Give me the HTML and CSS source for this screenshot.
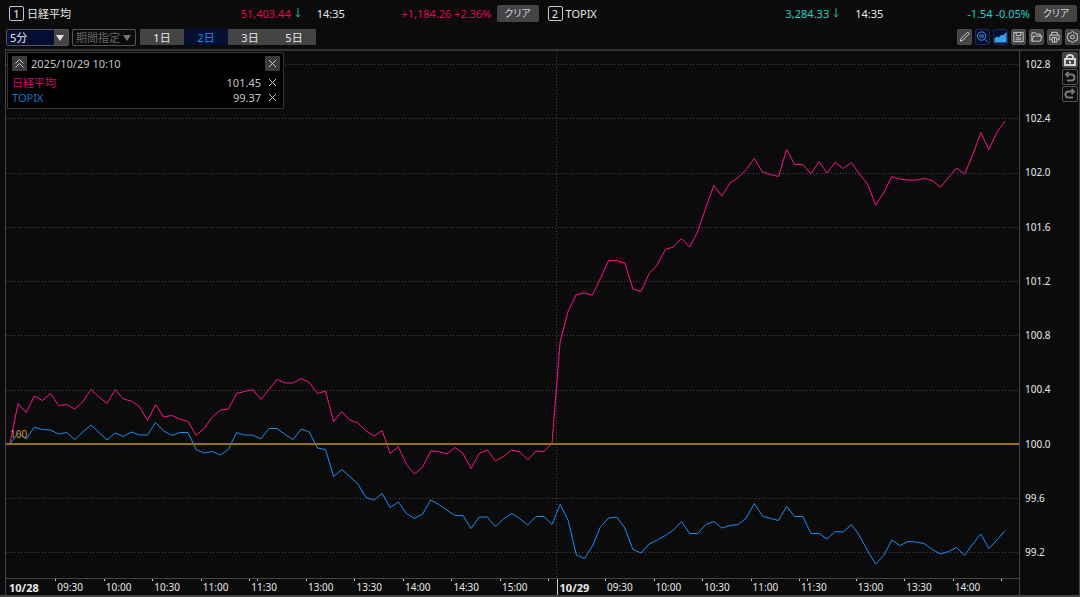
FILE: index.html
```html
<!DOCTYPE html>
<html lang="ja">

<head>
    <meta charset="UTF-8">
    <meta name="viewport" content="width=device-width, initial-scale=1.0">
    <title>比較チャート</title>
    <link rel="stylesheet" href="styles.css">
    <script src="chart.js" defer></script>
</head>

<body>
    <header class="quotes">
        <div class="quote">
            <div class="quote-main">
                <span class="num">1</span>
                <span class="name">日経平均</span>
                <span class="price up">51,403.44 <svg class="down" viewBox="0 0 6 10"><path d="M3 0V9M1 6.500L3 9L5 6.500" /></svg></span>
            </div>
            <span class="time">14:35</span>
            <span class="change up">+1,184.26 +2.36%</span>
            <button type="button" class="clear">クリア</button>
        </div>
        <div class="quote">
            <div class="quote-main">
                <span class="num">2</span>
                <span class="name">TOPIX</span>
                <span class="price fall">3,284.33 <svg class="down" viewBox="0 0 6 10"><path d="M3 0V9M1 6.500L3 9L5 6.500" /></svg></span>
            </div>
            <span class="time">14:35</span>
            <span class="change fall">-1.54 -0.05%</span>
            <button type="button" class="clear">クリア</button>
        </div>
    </header>

    <div class="toolbar">
        <div class="select interval">
            <select aria-label="足種">
                <option>5分</option>
            </select>
        </div>
        <div class="select term">
            <select aria-label="期間" disabled>
                <option>期間指定</option>
            </select>
        </div>
        <div class="days">
            <button type="button">1日</button>
            <button type="button" class="on">2日</button>
            <button type="button">3日</button>
            <button type="button">5日</button>
        </div>
        <div class="tools">
            <button type="button" class="tool" aria-label="描画">
                <svg viewBox="1 1 14 14"><path d="M3.500 12.500L4.300 9.800L10.800 3.300Q11.600 2.700 12.400 3.500Q13.200 4.300 12.600 5.100L6.200 11.600Z" /></svg>
            </button>
            <button type="button" class="tool on" aria-label="拡大">
                <svg viewBox="1 1 14 14"><circle cx="7" cy="7" r="4.500" /><path d="M10.500 10.500L14 14M4.500 6H9.500M4.500 8H9.500" /></svg>
            </button>
            <button type="button" class="tool on" aria-label="比較チャート">
                <svg viewBox="1 1 14 14"><path class="fill" d="M1.500 14V9.500L4 7.500L6 8.500L9 5.500L11 6L14.500 2.500V14Z" /></svg>
            </button>
            <button type="button" class="tool" aria-label="保存">
                <svg viewBox="1 1 14 14"><path d="M3 3H13V13H3ZM5.500 3V6.500H10.500V3M5 9H11M5 11H11" /></svg>
            </button>
            <button type="button" class="tool" aria-label="開く">
                <svg viewBox="1 1 14 14"><path d="M3 12.500V3.500H7L8 5H12V7M3 12.500L5 7H14L12 12.500Z" /></svg>
            </button>
            <button type="button" class="tool" aria-label="印刷">
                <svg viewBox="1 1 14 14"><path d="M5 6V3H11V6M5 11H3V6H13V11H11M5.500 8.500H10.500V13.500H5.500ZM8 9V13" /></svg>
            </button>
            <button type="button" class="tool" aria-label="設定">
                <svg viewBox="1 1 14 14"><path d="M8 2L10 3.500L13 4.500V7L14 8L13 9V11.500L10 12.500L8 14L6 12.500L3 11.500V9L2 8L3 7V4.500L6 3.500Z" /><circle cx="8" cy="8" r="2" /></svg>
            </button>
        </div>
    </div>

    <main class="chart">
        <div class="plot">
            <svg id="plot" viewBox="6 51 1013 527" preserveAspectRatio="none">
                <g id="grid" class="grid"></g>
                <path class="grid" d="M556.500 51V578" />
                <polyline id="nikkei" class="line nikkei" />
                <polyline id="topix" class="line topix" />
                <path class="base" d="M6 444H1019" />
            </svg>
            <span class="base-label">100</span>

            <section class="legend">
                <div class="legend-row legend-head">
                    <button type="button" class="box" aria-label="折りたたむ">
                        <svg viewBox="0 0 15 15"><path d="M3.500 7.500L7.500 3.500L11.500 7.500M3.500 11.500L7.500 7.500L11.500 11.500" /></svg>
                    </button>
                    <span class="date">2025/10/29 10:10</span>
                    <button type="button" class="box" aria-label="閉じる">
                        <svg viewBox="0 0 15 15"><path d="M4 4L11 11M11 4L4 11" /></svg>
                    </button>
                </div>
                <div class="legend-row">
                    <span class="label nikkei-text">日経平均</span>
                    <span>101.45</span>
                    <button type="button" class="remove" aria-label="日経平均を削除">
                        <svg viewBox="0 0 15 15"><path d="M4 4L11 11M11 4L4 11" /></svg>
                    </button>
                </div>
                <div class="legend-row">
                    <span class="label topix-text">TOPIX</span>
                    <span>99.37</span>
                    <button type="button" class="remove" aria-label="TOPIXを削除">
                        <svg viewBox="0 0 15 15"><path d="M4 4L11 11M11 4L4 11" /></svg>
                    </button>
                </div>
            </section>
        </div>

        <div class="y-axis">
            <span>102.8</span>
            <span>102.4</span>
            <span>102.0</span>
            <span>101.6</span>
            <span>101.2</span>
            <span>100.8</span>
            <span>100.4</span>
            <span>100.0</span>
            <span>99.6</span>
            <span>99.2</span>
        </div>

        <div class="side">
            <button type="button" class="tool" aria-label="ロック">
                <svg viewBox="1 1 14 14"><path class="bold" d="M3 7H13V13H3ZM5 7V5Q5 3 8 3Q11 3 11 5V7M8 9V11.500" /></svg>
            </button>
            <button type="button" class="tool off" aria-label="元に戻す">
                <svg viewBox="1 1 14 14"><path class="bold" d="M6.500 3L4 5.500L6.500 8M4 5.500H9.500Q12.500 5.500 12.500 8.500Q12.500 11.500 9.500 11.500H5" /></svg>
            </button>
            <button type="button" class="tool off" aria-label="やり直し">
                <svg viewBox="1 1 14 14"><path class="bold" d="M9.500 3L12 5.500L9.500 8M12 5.500H6.500Q3.500 5.500 3.500 8.500Q3.500 11.500 6.500 11.500H11" /></svg>
            </button>
        </div>

        <div class="x-axis">
            <span class="day">10/28</span>
            <span>09:30</span>
            <span>10:00</span>
            <span>10:30</span>
            <span>11:00</span>
            <span class="noon">11:30</span>
            <span>13:00</span>
            <span>13:30</span>
            <span>14:00</span>
            <span>14:30</span>
            <span>15:00</span>
            <span></span>
            <span class="day next">10/29</span>
            <span>09:30</span>
            <span>10:00</span>
            <span>10:30</span>
            <span>11:00</span>
            <span class="noon">11:30</span>
            <span>13:00</span>
            <span>13:30</span>
            <span>14:00</span>
            <span></span>
        </div>
    </main>
</body>

</html>
```
FILE: styles.css
```css
* {
    box-sizing: border-box;
    margin: 0;
    padding: 0;
}

body {
    display: flex;
    flex-direction: column;
    min-height: 100vh;
    font: 11px/15px "Noto Sans", "Noto Sans CJK JP", sans-serif;
    color: #e8e8e8;
    background: #0b0b0b;
    border-bottom: 2px solid #444;
}

button,
select {
    font: inherit;
    color: inherit;
    border: 0;
}

svg {
    display: block;
    fill: none;
    stroke: currentColor;
}

/* quotes */
.quotes {
    display: grid;
    grid-template-columns: 1fr 1fr;
    gap: 9px;
    padding: 4px 3px 0 9px;
}

.quote {
    display: grid;
    grid-template-columns: 289fr 49fr 145fr 42px;
    align-items: center;
    height: 18px;
}

.quote-main {
    display: flex;
    align-items: center;
    gap: 3px;
}

.num {
    width: 15px;
    height: 15px;
    line-height: 13px;
    text-align: center;
    border: 1px solid #c8c8c8;
    border-radius: 2px;
}

.price {
    display: flex;
    align-items: center;
    gap: 4px;
    margin-left: auto;
}

.down {
    width: 6px;
    height: 10px;
    color: #1fb79c;
}

.time {
    padding-left: 16px;
}

.change {
    text-align: right;
    padding-right: 5px;
    white-space: nowrap;
}

.up {
    color: #e3084f;
}

.fall {
    color: #20d3c2;
}

.clear {
    height: 17px;
    font-size: 10px;
    font-feature-settings: "palt";
    color: #c9d3de;
    background: #444;
    border-radius: 2px;
}

/* toolbar */
.toolbar {
    display: flex;
    align-items: center;
    gap: 3px;
    height: 27px;
    padding: 3px 0 0 6px;
}

.select {
    position: relative;
    height: 17px;
    border: 1px solid #555;
    border-radius: 2px;
}

.select select {
    width: 100%;
    height: 15px;
    padding-left: 3px;
    line-height: 15px;
    appearance: none;
    background: transparent;
}

.select::after {
    content: "";
    position: absolute;
    top: 5px;
    right: 4px;
    border: 4px solid transparent;
    border-top: 6px solid #e4e4e4;
    border-bottom: 0;
    pointer-events: none;
}

.interval {
    width: 63px;
    background: linear-gradient(to left, #444 14px, #060f33 14px);
}

.term {
    width: 64px;
    color: #666;
}

.term select {
    opacity: 1;
}

.term::after {
    border-top-color: #777;
}

.days {
    display: flex;
    margin-left: 1px;
}

.days button {
    width: 44px;
    height: 16px;
    background: #444;
}

.days .on {
    color: #1c94ea;
    background: #060f33;
}

.tools {
    display: flex;
    gap: 3px;
    margin-left: auto;
}

.tool {
    width: 15px;
    height: 16px;
    color: #d4d4d4;
    background: #444;
    border: 1px solid #4c4c4c;
    border-radius: 2px;
}

.tool svg {
    width: 100%;
    height: 14px;
}

.tool.on {
    color: #3aa0ec;
    background: #060f33;
    border-color: #1b2a5a;
}

.tool.off {
    color: #777;
    background: transparent;
    border-color: #555;
}

.fill {
    fill: currentColor;
    stroke: none;
}

.bold {
    stroke-width: 2;
}

/* chart */
.chart {
    flex: 1;
    display: grid;
    grid-template-columns: 1fr 43px 17px;
    grid-template-rows: 1fr 17px;
    margin-left: 5px;
    border: 1px solid #444;
    border-top: 2px solid #333;
    border-bottom: 0;
}

.plot {
    position: relative;
    min-height: 300px;
}

#plot {
    position: absolute;
    width: 100%;
    height: 100%;
}

#plot * {
    vector-effect: non-scaling-stroke;
}

.grid {
    stroke: #444;
    stroke-dasharray: 1 2;
    shape-rendering: crispEdges;
}

.line {
    stroke-width: 1;
}

.nikkei {
    stroke: #fa148c;
}

.topix {
    stroke: #1e8cf5;
}

.base {
    stroke: #94700f;
    stroke-width: 2;
}

.base-label {
    position: absolute;
    left: 4px;
    bottom: 136px;
    font-size: 10px;
    color: #c98c28;
}

.legend {
    position: absolute;
    top: 1px;
    left: 1px;
    width: 277px;
    padding: 3px 3px 3px 4px;
    color: #c4c4cc;
    background: #000;
    border: 1px solid #333;
}

.legend-row {
    display: flex;
    align-items: center;
    gap: 4px;
    height: 15px;
}

.legend-head {
    margin-bottom: 4px;
}

.date,
.label {
    flex: 1;
}

.box,
.remove {
    width: 15px;
    height: 15px;
    background: transparent;
}

.box {
    background: #3c3c3c;
}

.nikkei-text {
    color: #c80f6e;
}

.topix-text {
    color: #1a74cc;
}

.y-axis {
    display: flex;
    flex-direction: column;
    justify-content: space-between;
    grid-row: span 2;
    padding: 6px 0 35px 5px;
    font-size: 10px;
    line-height: 15px;
    border-left: 1px solid #444;
}

.side {
    grid-row: span 2;
    padding-top: 1px;
}

.side .tool {
    display: block;
    width: 16px;
    margin-bottom: 1px;
}

.x-axis {
    grid-row: 2;
    grid-column: 1;
    display: grid;
    grid-template-columns: 61fr 60fr 60fr 60fr 60fr 70fr 60fr 60fr 60fr 60fr 60fr 10fr 60fr 60fr 60fr 60fr 60fr 70fr 60fr 60fr 60fr 22fr;
    font-size: 10px;
    line-height: 17px;
    border-top: 1px solid #444;
}

.x-axis span {
    position: relative;
    min-width: 0;
    padding-left: 2px;
}

.x-axis span::before,
.noon::after {
    content: "";
    position: absolute;
    top: 0;
    left: 0;
    width: 1px;
    height: 2px;
    background: #ccc;
}

.x-axis .noon::after {
    left: 14%;
}

.x-axis .day {
    padding-left: 3px;
    font-size: 11px;
    font-weight: bold;
}

.x-axis .day::before {
    height: 0;
}

.x-axis .next::before {
    height: 16px;
}
```
FILE: chart.js
```javascript
var nikkei = [
    443, 403.5, 412.5, 396, 400.5, 393.5, 405.5, 404.5, 409, 402, 389.5, 397, 403.5, 389.5, 399, 401,
    406.5, 420.5, 404.5, 417, 415.5, 419, 421.5, 435.5, 428.5, 417, 410, 409, 393.5, 391.5, 389.5, 399.5,
    389.5, 379.5, 383, 383, 378.5, 382.5, 393.5, 391, 421.5, 411.5, 420, 423, 431, 436, 430.5, 453.5,
    446.5, 464.5, 474, 467, 451, 451.5, 454, 447.5, 453.5, 468.5, 453.5, 450, 461, 456.5, 450, 452,
    460, 451, 451.5, 443.5,
    342, 311, 294.5, 293, 295, 278, 260.5, 260.5, 263, 289, 291.5, 273.5, 265, 249.5, 247, 238.5,
    247, 232, 208, 185.5, 196, 183, 177.5, 169.5, 158.5, 172, 174.5, 176.5, 149.5, 164.5, 164.5, 174,
    161.5, 173, 162.5, 168.5, 162.5, 174, 184, 205, 193, 176.5, 179, 180, 180, 178.5, 180.5, 187.5,
    177.5, 168, 174, 155, 132.5, 149.5, 132, 121
];

var topix = [
    443.5, 433, 439, 427, 429.5, 430, 434, 432.5, 439.5, 432, 425, 432.5, 440, 433, 436.5, 432,
    435, 435, 422.5, 431, 435.5, 432.5, 432.5, 449.5, 453, 451.5, 455, 449.5, 432.5, 435, 435, 439,
    428.5, 428.5, 434.5, 439.5, 429, 432, 448, 449.5, 476.5, 469.5, 476.5, 484, 497.5, 500, 493.5, 507.5,
    502, 513.5, 518.5, 514, 500, 504.5, 510, 515.5, 515.5, 528.5, 517, 517, 526.5, 519, 513.5, 518.5,
    525, 516.5, 516.5, 524.5,
    504.5, 520.5, 555, 558.5, 546, 526.5, 518, 517, 528, 549.5, 553, 544, 540, 535.5, 530, 521.5,
    533.5, 533.5, 524.5, 521.5, 528, 525.5, 524.5, 518, 503.5, 516, 518.5, 520.5, 506.5, 516.5, 516.5, 533.5,
    533.5, 539, 531.5, 532, 524.5, 535.5, 550.5, 564, 555.5, 540, 545.5, 541.5, 542, 543.5, 549.5, 554,
    551.5, 547.5, 555.5, 544, 534, 548.5, 540, 530.5
];

// one point per 5 minute bar
function draw(id, data) {
    var points = [];
    for (var i = 0; i < data.length; i++) {
        points.push((10 + i * 8.09).toFixed(1) + ',' + data[i]);
    }
    document.getElementById(id).setAttribute('points', points.join(' '));
}

function drawGrid() {
    var grid = document.getElementById('grid');
    for (var i = 0; i < 10; i++) {
        if (i == 7) {
            continue;
        }
        var path = document.createElementNS('http://www.w3.org/2000/svg', 'path');
        path.setAttribute('d', 'M6 ' + (Math.round(64 + i * 54.25) + 0.5) + 'H1019');
        grid.appendChild(path);
    }
}

drawGrid();
draw('nikkei', nikkei);
draw('topix', topix);
```
